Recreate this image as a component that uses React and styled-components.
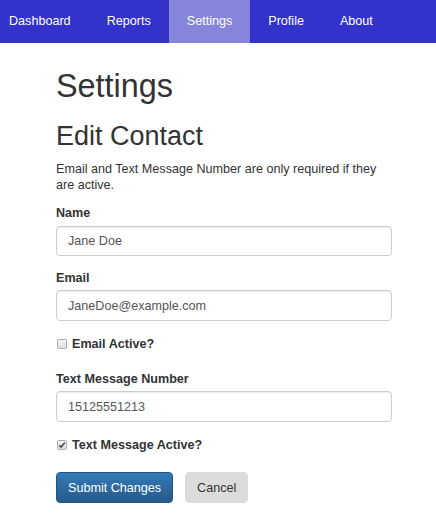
import React from 'react'
import styled, { createGlobalStyle } from 'styled-components';

const GlobalStyle = createGlobalStyle`
    body {
        margin: 0;
        background: #fff;
        font-family: "Liberation Sans", Arial, sans-serif;
        font-size: 12.6px;
        color: #333;
    }
`;

const NavBar = styled.nav`
    display: flex;
    height: 43px;
    background: #3333cc;
`;
const NavLink = styled.a`
    display: block;
    padding: 0 18px;
    line-height: 43px;
    color: #fff;
    font-size: 12.6px;
    text-decoration: none;
    background: ${props => props.$active ? '#8585db' : 'transparent'};
    &:first-child {
        padding-left: 9px;
    }
`;
const Page = styled.main`
    width: 336px;
    margin-left: 56px;
`;
const Title = styled.h1`
    margin: 26px 0 0;
    font-size: 32.4px;
    font-weight: 500;
    line-height: 1.1;
`;
const SubTitle = styled.h2`
    margin: 17px 0 0;
    font-size: 27px;
    font-weight: 500;
    line-height: 1.1;
`;
const Note = styled.p`
    margin: 11px 0 0;
    line-height: 15.5px;
`;
const FormGroup = styled.div`
    margin-top: ${props => props.$top}px;
`;
const Label = styled.label`
    display: block;
    font-weight: bold;
    line-height: 15px;
    margin-bottom: 4.5px;
`;
const Input = styled.input`
    display: block;
    box-sizing: border-box;
    width: 100%;
    height: 30.5px;
    padding: 5px 11px;
    border: 1px solid #ccc;
    border-radius: 4px;
    box-shadow: inset 0 1px 1px rgba(0, 0, 0, .075);
    font-family: inherit;
    font-size: 12.6px;
    color: #555;
    outline: none;
`;
const CheckRow = styled.label`
    display: flex;
    align-items: center;
    gap: 5px;
    margin-top: ${props => props.$top}px;
    font-weight: bold;
    line-height: 15px;
`;
const Box = styled.span`
    display: flex;
    align-items: center;
    justify-content: center;
    box-sizing: border-box;
    width: 10px;
    height: 10px;
    margin-left: 1px;
    border: 1px solid #adadad;
    border-radius: 2px;
    background: linear-gradient(to bottom, #f4f4f4, #dedede);
`;
const Actions = styled.div`
    display: flex;
    gap: 12px;
    margin-top: 19.5px;
`;
const Button = styled.button`
    height: 30.5px;
    padding: 0 11px;
    border: 1px solid ${props => props.$primary ? '#245580' : '#dcdcdc'};
    border-radius: 4px;
    background: ${props => props.$primary
        ? 'linear-gradient(to bottom, #337ab7 0, #265a88 100%)'
        : '#dcdcdc'};
    color: ${props => props.$primary ? '#fff' : '#333'};
    font-family: inherit;
    font-size: 12.6px;
`;

function Checkbox({ checked, children, top }) {
    return (
        <CheckRow $top={top}>
            <Box>
                {checked && (
                    <svg width="8" height="8" viewBox="0 0 8 8">
                        <path d="M1.2 4.2 L3.1 6.1 L6.9 1.6" fill="none" stroke="#4a4a4a" strokeWidth="1.6" />
                    </svg>
                )}
            </Box>
            {children}
        </CheckRow>
    )
}

const tabs = ['Dashboard', 'Reports', 'Settings', 'Profile', 'About'];

function App() {
    return (
        <>
        <GlobalStyle/>
        <NavBar>
            {tabs.map(t => <NavLink key={t} $active={t === 'Settings'}>{t}</NavLink>)}
        </NavBar>
        <Page>
            <Title>Settings</Title>
            <SubTitle>Edit Contact</SubTitle>
            <Note>Email and Text Message Number are only required if they are active.</Note>
            <FormGroup $top={13}>
                <Label>Name</Label>
                <Input defaultValue="Jane Doe"/>
            </FormGroup>
            <FormGroup $top={14.5}>
                <Label>Email</Label>
                <Input defaultValue="JaneDoe@example.com"/>
            </FormGroup>
            <Checkbox top={16}>Email Active?</Checkbox>
            <FormGroup $top={20}>
                <Label>Text Message Number</Label>
                <Input defaultValue="15125551213"/>
            </FormGroup>
            <Checkbox checked top={16}>Text Message Active?</Checkbox>
            <Actions>
                <Button $primary>Submit Changes</Button>
                <Button>Cancel</Button>
            </Actions>
        </Page>
        </>
    )
}

export default App
